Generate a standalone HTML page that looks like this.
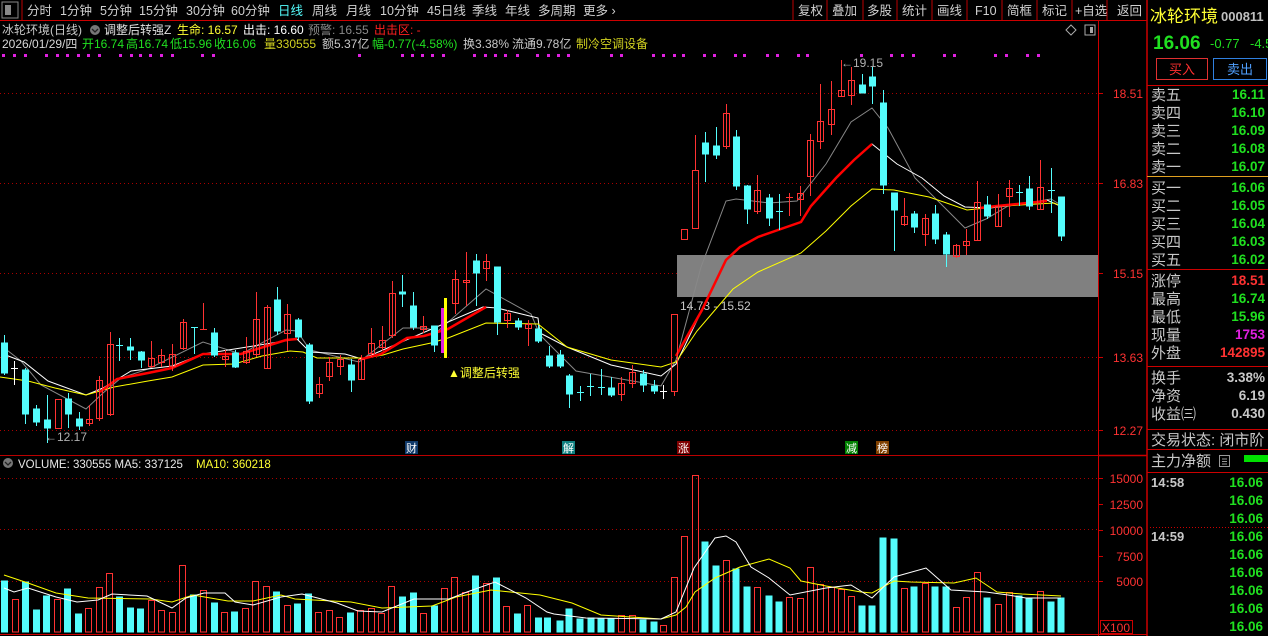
<!DOCTYPE html>
<html><head><meta charset="utf-8"><style>
html,body{margin:0;padding:0;background:#000;width:1268px;height:636px;overflow:hidden}
svg{display:block}
text{font-family:"Liberation Sans","Noto Sans CJK SC",sans-serif}
.c{fill:#54FCFC;stroke:#54FCFC;stroke-width:1}
.r{fill:none;stroke:#FF3232;stroke-width:1}
.cw{stroke:#54FCFC;stroke-width:1}
.rw{stroke:#FF3232;stroke-width:1}
</style></head><body>
<svg width="1268" height="636" viewBox="0 0 1268 636" xmlns="http://www.w3.org/2000/svg">
<!-- toolbar -->
<rect x="2" y="2" width="16" height="16" fill="none" stroke="#888"/>
<rect x="5" y="5" width="6" height="10" fill="#888"/>
<line x1="22" y1="0" x2="22" y2="20" stroke="#b00"/>
<g font-size="12.5" fill="#d0d0d0">
<text x="27" y="15">分时</text><text x="60" y="15">1分钟</text><text x="100" y="15">5分钟</text><text x="139" y="15">15分钟</text><text x="186" y="15">30分钟</text><text x="231" y="15">60分钟</text>
<text x="278" y="15" fill="#54FCFC">日线</text><text x="312" y="15">周线</text><text x="346" y="15">月线</text><text x="380" y="15">10分钟</text><text x="427" y="15">45日线</text><text x="472" y="15">季线</text><text x="505" y="15">年线</text><text x="538" y="15">多周期</text><text x="583" y="15">更多 ›</text>
<text x="798" y="15">复权</text><text x="832" y="15">叠加</text><text x="867" y="15">多股</text><text x="902" y="15">统计</text><text x="937" y="15">画线</text><text x="975" y="15">F10</text><text x="1007" y="15">简框</text><text x="1042" y="15">标记</text><text x="1075" y="15">+自选</text><text x="1117" y="15">返回</text>
</g>
<g stroke="#b00"><line x1="793" y1="0" x2="793" y2="20"/><line x1="827" y1="0" x2="827" y2="20"/><line x1="863" y1="0" x2="863" y2="20"/><line x1="897" y1="0" x2="897" y2="20"/><line x1="932" y1="0" x2="932" y2="20"/><line x1="967" y1="0" x2="967" y2="20"/><line x1="1002" y1="0" x2="1002" y2="20"/><line x1="1037" y1="0" x2="1037" y2="20"/><line x1="1072" y1="0" x2="1072" y2="20"/><line x1="1107" y1="0" x2="1107" y2="20"/></g>
<line x1="0" y1="20.5" x2="1147" y2="20.5" stroke="#c00"/>
<line x1="1147" y1="0" x2="1147" y2="636" stroke="#c00" stroke-width="1.5"/>
<line x1="1098.5" y1="20" x2="1098.5" y2="636" stroke="#c00"/>
<!-- header lines -->
<g font-size="12">
<text x="2" y="34" fill="#c8c8c8">冰轮环境(日线)</text>
<circle cx="95" cy="30" r="5" fill="#777"/><path d="M92 29 L95 32 L98 29" stroke="#222" fill="none" stroke-width="1.3"/>
<text x="104" y="34" fill="#e0e0e0">调整后转强Z</text>
<text x="177" y="34" fill="#ffff33">生命: 16.57</text>
<text x="243" y="34" fill="#fff">出击: 16.60</text>
<text x="308" y="34" fill="#888">预警: 16.55</text>
<text x="374" y="34" fill="#ff2020">出击区: -</text>
<text x="2" y="48" fill="#d8d8d8">2026/01/29/四</text>
<text x="82" y="48" fill="#20e020">开16.74</text>
<text x="126" y="48" fill="#20e020">高16.74</text>
<text x="170" y="48" fill="#20e020">低15.96</text>
<text x="214" y="48" fill="#20e020">收16.06</text>
<text x="264" y="48" fill="#d0d020">量330555</text>
<text x="322" y="48" fill="#c8c8c8">额5.37亿</text>
<text x="372" y="48" fill="#20e020">幅-0.77(-4.58%)</text>
<text x="463" y="48" fill="#c8c8c8">换3.38%</text>
<text x="512" y="48" fill="#c8c8c8">流通9.78亿</text>
<text x="576" y="48" fill="#d0d020">制冷空调设备</text>
</g>
<path d="M1071 25 L1076 30 L1071 35 L1066 30 Z" fill="none" stroke="#aaa"/>
<rect x="1085" y="25" width="10" height="10" fill="none" stroke="#aaa"/><rect x="1090" y="27" width="3" height="6" fill="#aaa"/>
<!-- magenta dots -->
<g fill="#e020e0">
<rect x="2" y="54" width="3" height="3"/><rect x="13" y="54" width="3" height="3"/><rect x="24" y="54" width="3" height="3"/><rect x="45" y="54" width="3" height="3"/><rect x="56" y="54" width="3" height="3"/><rect x="66" y="54" width="3" height="3"/><rect x="77" y="54" width="3" height="3"/><rect x="87" y="54" width="3" height="3"/><rect x="98" y="54" width="3" height="3"/><rect x="119" y="54" width="3" height="3"/><rect x="130" y="54" width="3" height="3"/><rect x="139" y="54" width="3" height="3"/><rect x="149" y="54" width="3" height="3"/><rect x="160" y="54" width="3" height="3"/><rect x="171" y="54" width="3" height="3"/><rect x="201" y="54" width="3" height="3"/><rect x="212" y="54" width="3" height="3"/><rect x="358" y="54" width="3" height="3"/><rect x="401" y="54" width="3" height="3"/><rect x="411" y="54" width="3" height="3"/><rect x="421" y="54" width="3" height="3"/><rect x="431" y="54" width="3" height="3"/><rect x="442" y="54" width="3" height="3"/><rect x="473" y="54" width="3" height="3"/><rect x="484" y="54" width="3" height="3"/><rect x="494" y="54" width="3" height="3"/><rect x="504" y="54" width="3" height="3"/><rect x="516" y="54" width="3" height="3"/><rect x="536" y="54" width="3" height="3"/><rect x="547" y="54" width="3" height="3"/><rect x="557" y="54" width="3" height="3"/><rect x="567" y="54" width="3" height="3"/><rect x="610" y="54" width="3" height="3"/><rect x="620" y="54" width="3" height="3"/><rect x="652" y="54" width="3" height="3"/><rect x="662" y="54" width="3" height="3"/><rect x="673" y="54" width="3" height="3"/><rect x="682" y="54" width="3" height="3"/><rect x="703" y="54" width="3" height="3"/><rect x="713" y="54" width="3" height="3"/><rect x="734" y="54" width="3" height="3"/><rect x="743" y="54" width="3" height="3"/><rect x="766" y="54" width="3" height="3"/><rect x="776" y="54" width="3" height="3"/><rect x="797" y="54" width="3" height="3"/><rect x="806" y="54" width="3" height="3"/><rect x="860" y="54" width="3" height="3"/><rect x="890" y="54" width="3" height="3"/><rect x="901" y="54" width="3" height="3"/><rect x="912" y="54" width="3" height="3"/><rect x="943" y="54" width="3" height="3"/><rect x="953" y="54" width="3" height="3"/><rect x="994" y="54" width="3" height="3"/><rect x="1005" y="54" width="3" height="3"/><rect x="1026" y="54" width="3" height="3"/><rect x="1037" y="54" width="3" height="3"/>
</g>
<!-- grid -->
<g stroke="#a00" stroke-dasharray="1,3">
<line x1="0" y1="93.5" x2="1098" y2="93.5"/><line x1="0" y1="183.5" x2="1098" y2="183.5"/><line x1="0" y1="273.5" x2="1098" y2="273.5"/><line x1="0" y1="357.5" x2="1098" y2="357.5"/><line x1="0" y1="430.5" x2="1098" y2="430.5"/>
<line x1="0" y1="478.5" x2="1098" y2="478.5"/><line x1="0" y1="529.5" x2="1098" y2="529.5"/><line x1="0" y1="581.5" x2="1098" y2="581.5"/>
</g>
<!-- gray box -->
<rect x="677" y="255" width="421" height="42" fill="#808080"/>
<text x="680" y="310" font-size="12" fill="#c8c8c8">14.73 - 15.52</text>
<!-- MA lines -->
<polyline fill="none" stroke="#888" stroke-width="1" points="3,347 21,361 41,385 86,409 103,393 121,378 148,369 203,342 241,354 286,330 297,331 310,350 359,362 403,328 424,328 438,331 486,289 531,314 540,335 576,371 661,386 676,360 701,267 726,201 736,199 769,203 797,201 826,164 851,122 872,108 888,128 915,178 965,228 986,219 1008,206 1051,199 1061,205"/>
<polyline fill="none" stroke="#fff" stroke-width="1" points="3,354 24,362 48,381 86,395 103,388 131,371 172,366 203,354 297,339 310,352 345,354 362,359 483,307 497,308 538,318 540,333 567,347 611,365 661,376 676,364 702,310 726,260 740,247 758,237 801,222 811,206 836,178 854,160 872,144 897,164 922,178 944,196 965,207 990,208 1033,203 1047,200 1060,206"/>
<polyline fill="none" stroke="#ffff00" stroke-width="1" points="0,377 28,381 55,388 86,395 114,387 148,381 172,377 203,365 234,364 262,356 290,351 303,352 317,358 366,358 383,355 403,349 431,343 448,338 486,323 538,324 567,347 611,360 661,367 676,362 697,331 715,310 733,289 758,272 801,253 826,231 851,206 872,189 894,190 929,197 967,210 1004,206 1054,203 1061,206"/>
<polyline fill="none" stroke="#ff0000" stroke-width="2.5" points="100,392 117,379 148,373 172,368 203,354 241,354 286,340 297,339"/>
<polyline fill="none" stroke="#ff0000" stroke-width="2.5" points="362,359 381,354 407,338 424,336 448,329 486,307"/>
<polyline fill="none" stroke="#ff0000" stroke-width="2.5" points="676,356 702,310 726,260 740,247 758,237 801,222 811,206 836,178 854,160 872,144"/>
<polyline fill="none" stroke="#ff0000" stroke-width="2.5" points="980,208 997,206 1047,201"/>
<!-- candles -->
<g>
<line class="cw" x1="4.5" y1="335" x2="4.5" y2="375"/><rect class="c" x="1.5" y="343" width="6" height="30"/>
<line stroke="#fff" x1="14.5" y1="361" x2="14.5" y2="385"/><line stroke="#fff" x1="11" y1="368.5" x2="18" y2="368.5"/>
<line class="cw" x1="25.5" y1="368" x2="25.5" y2="424"/><rect class="c" x="22.5" y="370" width="6" height="44"/>
<line class="cw" x1="36.5" y1="405" x2="36.5" y2="426"/><rect class="c" x="33.5" y="409" width="6" height="13"/>
<line class="cw" x1="47.5" y1="395" x2="47.5" y2="443"/><rect class="c" x="44.5" y="420" width="6" height="8"/>
<rect class="r" x="55.5" y="399.5" width="6" height="29"/>
<line class="cw" x1="68.5" y1="393" x2="68.5" y2="428"/><rect class="c" x="65.5" y="399" width="6" height="15"/>
<line class="cw" x1="79.5" y1="412" x2="79.5" y2="430"/><rect class="c" x="76.5" y="419" width="6" height="7"/>
<line class="rw" x1="89.5" y1="405" x2="89.5" y2="426"/><rect class="r" x="86.5" y="419.5" width="6" height="4" fill="#000"/>
<line class="rw" x1="99.5" y1="376" x2="99.5" y2="421"/><rect class="r" x="96.5" y="380.5" width="6" height="38" fill="#000"/>
<line class="rw" x1="110.5" y1="332" x2="110.5" y2="416"/><rect class="r" x="107.5" y="344.5" width="6" height="70" fill="#000"/>
<line class="cw" x1="119.5" y1="338" x2="119.5" y2="361"/><line class="cw" x1="116" y1="345.5" x2="123" y2="345.5"/>
<line class="cw" x1="130.5" y1="338" x2="130.5" y2="360"/><rect class="c" x="127.5" y="347" width="6" height="3"/>
<line class="cw" x1="141.5" y1="351" x2="141.5" y2="368"/><rect class="c" x="138.5" y="352" width="6" height="8"/>
<line class="rw" x1="151.5" y1="341" x2="151.5" y2="368"/><rect class="r" x="148.5" y="358.5" width="6" height="8" fill="#000"/>
<line class="rw" x1="161.5" y1="349" x2="161.5" y2="367"/><rect class="r" x="158.5" y="355.5" width="6" height="7" fill="#000"/>
<line class="rw" x1="172.5" y1="344" x2="172.5" y2="371"/><rect class="r" x="169.5" y="354.5" width="6" height="12" fill="#000"/>
<line class="rw" x1="183.5" y1="319" x2="183.5" y2="350"/><rect class="r" x="180.5" y="322.5" width="6" height="26" fill="#000"/>
<line class="cw" x1="194.5" y1="327" x2="194.5" y2="354"/><line class="cw" x1="191" y1="327.5" x2="198" y2="327.5"/>
<line class="rw" x1="203.5" y1="303" x2="203.5" y2="330"/><line class="rw" x1="200" y1="329.5" x2="207" y2="329.5"/>
<line class="cw" x1="214.5" y1="328" x2="214.5" y2="357"/><rect class="c" x="211.5" y="333" width="6" height="22"/>
<line class="rw" x1="225.5" y1="350" x2="225.5" y2="367"/><rect class="r" x="222.5" y="356.5" width="6" height="3" fill="#000"/>
<line class="cw" x1="235.5" y1="350" x2="235.5" y2="368"/><rect class="c" x="232.5" y="353" width="6" height="14"/>
<line class="rw" x1="246.5" y1="337" x2="246.5" y2="364"/><rect class="r" x="243.5" y="351.5" width="6" height="11" fill="#000"/>
<line class="rw" x1="256.5" y1="292" x2="256.5" y2="357"/><rect class="r" x="253.5" y="319.5" width="6" height="35" fill="#000"/>
<line class="rw" x1="267.5" y1="305" x2="267.5" y2="369"/><rect class="r" x="264.5" y="307.5" width="6" height="61" fill="#000"/>
<line class="cw" x1="277.5" y1="287" x2="277.5" y2="335"/><rect class="c" x="274.5" y="300" width="6" height="31"/>
<line class="rw" x1="287.5" y1="304" x2="287.5" y2="351"/><rect class="r" x="284.5" y="314.5" width="6" height="19" fill="#000"/>
<line class="cw" x1="298.5" y1="318" x2="298.5" y2="340"/><rect class="c" x="295.5" y="320" width="6" height="17"/>
<line class="cw" x1="309.5" y1="343" x2="309.5" y2="404"/><rect class="c" x="306.5" y="345" width="6" height="56"/>
<line class="rw" x1="319.5" y1="377" x2="319.5" y2="398"/><rect class="r" x="316.5" y="384.5" width="6" height="9" fill="#000"/>
<line class="rw" x1="329.5" y1="357" x2="329.5" y2="381"/><rect class="r" x="326.5" y="362.5" width="6" height="14" fill="#000"/>
<line class="rw" x1="340.5" y1="355" x2="340.5" y2="375"/><rect class="r" x="337.5" y="359.5" width="6" height="7" fill="#000"/>
<line class="cw" x1="351.5" y1="359" x2="351.5" y2="392"/><rect class="c" x="348.5" y="365" width="6" height="15"/>
<line class="rw" x1="361.5" y1="355" x2="361.5" y2="380"/><rect class="r" x="358.5" y="359.5" width="6" height="20" fill="#000"/>
<line class="rw" x1="371.5" y1="328" x2="371.5" y2="357"/><rect class="r" x="368.5" y="343.5" width="6" height="10" fill="#000"/>
<line class="rw" x1="382.5" y1="326" x2="382.5" y2="351"/><rect class="r" x="379.5" y="340.5" width="6" height="7" fill="#000"/>
<line class="rw" x1="392.5" y1="281" x2="392.5" y2="338"/><rect class="r" x="389.5" y="293.5" width="6" height="42" fill="#000"/>
<line class="cw" x1="402.5" y1="275" x2="402.5" y2="307"/><rect class="c" x="399.5" y="292" width="6" height="2"/>
<line class="cw" x1="413.5" y1="292" x2="413.5" y2="330"/><rect class="c" x="410.5" y="306" width="6" height="21"/>
<line class="rw" x1="423.5" y1="316" x2="423.5" y2="333"/><rect class="r" x="420.5" y="326.5" width="6" height="3" fill="#000"/>
<line class="cw" x1="434.5" y1="326" x2="434.5" y2="352"/><rect class="c" x="431.5" y="326" width="6" height="19"/>
<rect x="441" y="308" width="4" height="45" fill="#e020e0"/><rect x="444" y="298" width="3" height="60" fill="#ffff00"/>
<line class="rw" x1="455.5" y1="270" x2="455.5" y2="314"/><rect class="r" x="452.5" y="279.5" width="6" height="24" fill="#000"/>
<line class="rw" x1="466.5" y1="252" x2="466.5" y2="306"/><rect class="r" x="463.5" y="280.5" width="6" height="2" fill="#000"/>
<line class="cw" x1="476.5" y1="254" x2="476.5" y2="306"/><rect class="c" x="473.5" y="261" width="6" height="12"/>
<line class="rw" x1="486.5" y1="254" x2="486.5" y2="281"/><rect class="r" x="483.5" y="261.5" width="6" height="7" fill="#000"/>
<line class="cw" x1="497.5" y1="267" x2="497.5" y2="335"/><rect class="c" x="494.5" y="267" width="6" height="55"/>
<line class="rw" x1="507.5" y1="310" x2="507.5" y2="328"/><rect class="r" x="504.5" y="313.5" width="6" height="7" fill="#000"/>
<line class="cw" x1="518.5" y1="318" x2="518.5" y2="330"/><rect class="c" x="515.5" y="321" width="6" height="6"/>
<line class="rw" x1="528.5" y1="320" x2="528.5" y2="346"/><rect class="r" x="525.5" y="324.5" width="6" height="4" fill="#000"/>
<line class="cw" x1="538.5" y1="325" x2="538.5" y2="343"/><rect class="c" x="535.5" y="329" width="6" height="12"/>
<line class="cw" x1="549.5" y1="346" x2="549.5" y2="368"/><rect class="c" x="546.5" y="356" width="6" height="10"/>
<line class="cw" x1="560.5" y1="350" x2="560.5" y2="368"/><rect class="c" x="557.5" y="355" width="6" height="11"/>
<line class="cw" x1="569.5" y1="374" x2="569.5" y2="408"/><rect class="c" x="566.5" y="376" width="6" height="18"/>
<line class="cw" x1="580.5" y1="386" x2="580.5" y2="401"/><line class="cw" x1="577" y1="392.5" x2="584" y2="392.5"/>
<line class="cw" x1="590.5" y1="374" x2="590.5" y2="396"/><line class="cw" x1="587" y1="386.5" x2="594" y2="386.5"/>
<line class="cw" x1="601.5" y1="369" x2="601.5" y2="395"/><line class="cw" x1="598" y1="387.5" x2="605" y2="387.5"/>
<line class="cw" x1="611.5" y1="377" x2="611.5" y2="397"/><rect class="c" x="608.5" y="388" width="6" height="7"/>
<line class="rw" x1="621.5" y1="377" x2="621.5" y2="401"/><rect class="r" x="618.5" y="383.5" width="6" height="11" fill="#000"/>
<line class="rw" x1="632.5" y1="365" x2="632.5" y2="388"/><rect class="r" x="629.5" y="372.5" width="6" height="11" fill="#000"/>
<line class="cw" x1="643.5" y1="370" x2="643.5" y2="392"/><rect class="c" x="640.5" y="374" width="6" height="11"/>
<line class="cw" x1="654.5" y1="380" x2="654.5" y2="394"/><rect class="c" x="651.5" y="386" width="6" height="5"/>
<line stroke="#fff" x1="663.5" y1="385" x2="663.5" y2="399"/><line stroke="#fff" x1="660" y1="391.5" x2="667" y2="391.5"/>
<line class="rw" x1="674.5" y1="391" x2="674.5" y2="396"/><rect class="r" x="671.5" y="314.5" width="6" height="77" fill="none"/>
<rect class="r" x="681.5" y="229.5" width="6" height="10" fill="#000"/>
<line class="rw" x1="695.5" y1="135" x2="695.5" y2="170"/><rect class="r" x="692.5" y="170.5" width="6" height="58" fill="#000"/>
<line class="cw" x1="705.5" y1="132" x2="705.5" y2="182"/><rect class="c" x="702.5" y="143" width="6" height="11"/>
<line class="cw" x1="716.5" y1="127" x2="716.5" y2="159"/><rect class="c" x="713.5" y="146" width="6" height="9"/>
<line class="rw" x1="726.5" y1="104" x2="726.5" y2="149"/><rect class="r" x="723.5" y="113.5" width="6" height="33" fill="#000"/>
<line class="cw" x1="736.5" y1="130" x2="736.5" y2="190"/><rect class="c" x="733.5" y="137" width="6" height="49"/>
<line class="cw" x1="747.5" y1="185" x2="747.5" y2="224"/><rect class="c" x="744.5" y="186" width="6" height="23"/>
<line class="rw" x1="757.5" y1="175" x2="757.5" y2="214"/><rect class="r" x="754.5" y="190.5" width="6" height="21" fill="#000"/>
<line class="cw" x1="769.5" y1="194" x2="769.5" y2="226"/><rect class="c" x="766.5" y="198" width="6" height="20"/>
<line class="cw" x1="779.5" y1="194" x2="779.5" y2="230"/><line class="cw" x1="776" y1="211.5" x2="783" y2="211.5"/>
<line class="rw" x1="789.5" y1="193" x2="789.5" y2="216"/><line class="rw" x1="786" y1="197.5" x2="793" y2="197.5"/>
<line class="rw" x1="800.5" y1="186" x2="800.5" y2="216"/><rect class="r" x="797.5" y="193.5" width="6" height="6" fill="#000"/>
<line class="rw" x1="810.5" y1="134" x2="810.5" y2="196"/><rect class="r" x="807.5" y="140.5" width="6" height="36" fill="#000"/>
<line class="rw" x1="820.5" y1="84" x2="820.5" y2="149"/><rect class="r" x="817.5" y="121.5" width="6" height="20" fill="#000"/>
<line class="rw" x1="831.5" y1="81" x2="831.5" y2="135"/><rect class="r" x="828.5" y="109.5" width="6" height="15" fill="#000"/>
<line class="rw" x1="841.5" y1="60" x2="841.5" y2="96"/><rect class="r" x="838.5" y="90.5" width="6" height="6" fill="#000"/>
<line class="rw" x1="851.5" y1="67" x2="851.5" y2="105"/><rect class="r" x="848.5" y="80.5" width="6" height="15" fill="#000"/>
<line class="cw" x1="862.5" y1="74" x2="862.5" y2="93"/><rect class="c" x="859.5" y="85" width="6" height="8"/>
<line class="cw" x1="872.5" y1="67" x2="872.5" y2="104"/><rect class="c" x="869.5" y="77" width="6" height="9"/>
<line class="cw" x1="883.5" y1="90" x2="883.5" y2="194"/><rect class="c" x="880.5" y="103" width="6" height="82"/>
<line class="cw" x1="894.5" y1="193" x2="894.5" y2="251"/><rect class="c" x="891.5" y="193" width="6" height="17"/>
<line class="rw" x1="904.5" y1="198" x2="904.5" y2="226"/><rect class="r" x="901.5" y="216.5" width="6" height="8" fill="#000"/>
<line class="cw" x1="914.5" y1="211" x2="914.5" y2="233"/><rect class="c" x="911.5" y="214" width="6" height="13"/>
<line class="rw" x1="925.5" y1="214" x2="925.5" y2="246"/><rect class="r" x="922.5" y="218.5" width="6" height="16" fill="#000"/>
<line class="cw" x1="935.5" y1="205" x2="935.5" y2="244"/><rect class="c" x="932.5" y="214" width="6" height="25"/>
<line class="cw" x1="946.5" y1="232" x2="946.5" y2="267"/><rect class="c" x="943.5" y="235" width="6" height="19"/>
<line class="rw" x1="956.5" y1="244" x2="956.5" y2="258"/><rect class="r" x="953.5" y="245.5" width="6" height="11" fill="#000"/>
<line class="rw" x1="966.5" y1="229" x2="966.5" y2="255"/><rect class="r" x="963.5" y="241.5" width="6" height="4" fill="#000"/>
<line class="rw" x1="977.5" y1="181" x2="977.5" y2="241"/><rect class="r" x="974.5" y="202.5" width="6" height="38" fill="#000"/>
<line class="cw" x1="987.5" y1="196" x2="987.5" y2="219"/><rect class="c" x="984.5" y="205" width="6" height="11"/>
<line class="rw" x1="998.5" y1="194" x2="998.5" y2="226"/><rect class="r" x="995.5" y="206.5" width="6" height="20" fill="#000"/>
<line class="rw" x1="1009.5" y1="180" x2="1009.5" y2="217"/><rect class="r" x="1006.5" y="188.5" width="6" height="8" fill="#000"/>
<line class="cw" x1="1019.5" y1="185" x2="1019.5" y2="206"/><line class="cw" x1="1016" y1="192.5" x2="1023" y2="192.5"/>
<line class="cw" x1="1029.5" y1="176" x2="1029.5" y2="210"/><rect class="c" x="1026.5" y="189" width="6" height="17"/>
<line class="rw" x1="1040.5" y1="160" x2="1040.5" y2="209"/><rect class="r" x="1037.5" y="187.5" width="6" height="22" fill="#000"/>
<line class="cw" x1="1051.5" y1="168" x2="1051.5" y2="213"/><line class="cw" x1="1048" y1="190.5" x2="1055" y2="190.5"/>
<line class="cw" x1="1061.5" y1="197" x2="1061.5" y2="241"/><rect class="c" x="1058.5" y="197" width="6" height="39"/>
</g>
<!-- annotations -->
<text x="448" y="377" font-size="12" fill="#ffff33">▲调整后转强</text>
<text x="45" y="441" font-size="12" fill="#b0b0b0">←12.17</text>
<text x="841" y="67" font-size="12" fill="#b0b0b0">←19.15</text>
<line x1="0" y1="455.5" x2="1098" y2="455.5" stroke="#b00"/>
<g font-size="11" fill="#fff" text-anchor="middle">
<rect x="405" y="441" width="13" height="13" fill="#103a6a"/><text x="411.5" y="452">财</text>
<rect x="562" y="441" width="13" height="13" fill="#108080"/><text x="568.5" y="452">解</text>
<rect x="677" y="441" width="13" height="13" fill="#800000"/><text x="683.5" y="452">涨</text>
<rect x="845" y="441" width="13" height="13" fill="#008000"/><text x="851.5" y="452">减</text>
<rect x="876" y="441" width="13" height="13" fill="#804000"/><text x="882.5" y="452">榜</text>
</g>
<!-- volume panel -->
<circle cx="8" cy="463" r="5" fill="#777"/><path d="M5 462 L8 465 L11 462" stroke="#222" fill="none" stroke-width="1.3"/>
<text x="18" y="468" font-size="11.5" fill="#e8e8e8">VOLUME: 330555  MA5: 337125</text>
<text x="196" y="468" font-size="11.5" fill="#ffff33">MA10: 360218</text>
<g>
<rect class="c" x="1.5" y="581" width="6" height="51"/>
<rect class="r" x="12.5" y="599.5" width="6" height="32.5"/>
<rect class="c" x="22.5" y="582" width="6" height="50"/>
<rect class="c" x="33.5" y="610" width="6" height="22"/>
<rect class="c" x="43.5" y="596" width="6" height="36"/>
<rect class="r" x="54.5" y="599.5" width="6" height="32.5"/>
<rect class="c" x="64.5" y="589" width="6" height="43"/>
<rect class="c" x="75.5" y="614" width="6" height="18"/>
<rect class="r" x="85.5" y="608.5" width="6" height="23.5"/>
<rect class="r" x="96.5" y="587.5" width="6" height="44.5"/>
<rect class="r" x="106.5" y="573.5" width="6" height="58.5"/>
<rect class="c" x="116.5" y="597" width="6" height="35"/>
<rect class="c" x="127.5" y="608" width="6" height="24"/>
<rect class="c" x="137.5" y="609" width="6" height="23"/>
<rect class="r" x="148.5" y="600.5" width="6" height="31.5"/>
<rect class="r" x="158.5" y="610.5" width="6" height="21.5"/>
<rect class="r" x="169.5" y="612.5" width="6" height="19.5"/>
<rect class="r" x="179.5" y="565.5" width="6" height="66.5"/>
<rect class="c" x="190.5" y="595" width="6" height="37"/>
<rect class="r" x="200.5" y="590.5" width="6" height="41.5"/>
<rect class="c" x="211.5" y="603" width="6" height="29"/>
<rect class="r" x="221.5" y="612.5" width="6" height="19.5"/>
<rect class="c" x="231.5" y="612" width="6" height="20"/>
<rect class="r" x="242.5" y="608.5" width="6" height="23.5"/>
<rect class="r" x="252.5" y="581.5" width="6" height="50.5"/>
<rect class="r" x="263.5" y="586.5" width="6" height="45.5"/>
<rect class="c" x="273.5" y="592" width="6" height="40"/>
<rect class="r" x="284.5" y="605.5" width="6" height="26.5"/>
<rect class="c" x="294.5" y="604" width="6" height="28"/>
<rect class="c" x="305.5" y="594" width="6" height="38"/>
<rect class="r" x="315.5" y="612.5" width="6" height="19.5"/>
<rect class="r" x="326.5" y="610.5" width="6" height="21.5"/>
<rect class="r" x="336.5" y="617.5" width="6" height="14.5"/>
<rect class="c" x="347.5" y="613" width="6" height="19"/>
<rect class="r" x="357.5" y="610.5" width="6" height="21.5"/>
<rect class="r" x="368.5" y="608.5" width="6" height="23.5"/>
<rect class="r" x="378.5" y="613.5" width="6" height="18.5"/>
<rect class="r" x="388.5" y="586.5" width="6" height="45.5"/>
<rect class="c" x="399.5" y="597" width="6" height="35"/>
<rect class="c" x="410.5" y="593" width="6" height="39"/>
<rect class="r" x="420.5" y="613.5" width="6" height="18.5"/>
<rect class="c" x="431.5" y="606" width="6" height="26"/>
<rect class="r" x="441.5" y="588.5" width="6" height="43.5"/>
<rect class="r" x="451.5" y="577.5" width="6" height="54.5"/>
<rect class="r" x="462.5" y="592.5" width="6" height="39.5"/>
<rect class="c" x="472.5" y="576" width="6" height="56"/>
<rect class="r" x="483.5" y="583.5" width="6" height="48.5"/>
<rect class="c" x="493.5" y="578" width="6" height="54"/>
<rect class="r" x="503.5" y="606.5" width="6" height="25.5"/>
<rect class="c" x="514.5" y="614" width="6" height="18"/>
<rect class="r" x="524.5" y="605.5" width="6" height="26.5"/>
<rect class="c" x="535.5" y="618" width="6" height="14"/>
<rect class="c" x="544.5" y="618" width="6" height="14"/>
<rect class="c" x="557" y="621" width="6" height="11"/>
<rect class="c" x="566" y="609" width="6" height="23"/>
<rect class="c" x="577" y="619" width="6" height="13"/>
<rect class="c" x="588" y="618" width="6" height="14"/>
<rect class="c" x="598" y="619" width="6" height="13"/>
<rect class="c" x="608" y="619" width="6" height="13"/>
<rect class="r" x="618.5" y="615.5" width="6" height="16.5"/>
<rect class="r" x="629.5" y="615.5" width="6" height="16.5"/>
<rect class="c" x="640" y="620" width="6" height="12"/>
<rect class="c" x="651" y="622" width="6" height="10"/>
<rect class="r" x="660.5" y="625.5" width="6" height="6.5"/>
<rect class="r" x="671.5" y="577.5" width="6" height="54.5"/>
<rect class="r" x="681.5" y="536.5" width="6" height="95.5"/>
<rect class="r" x="692.5" y="475.5" width="6" height="156.5"/>
<rect class="c" x="702" y="542" width="6" height="90"/>
<rect class="c" x="713" y="566" width="6" height="66"/>
<rect class="r" x="723.5" y="560.5" width="6" height="71.5"/>
<rect class="c" x="733" y="569" width="6" height="63"/>
<rect class="c" x="744" y="587" width="6" height="45"/>
<rect class="r" x="754.5" y="587.5" width="6" height="44.5"/>
<rect class="c" x="766" y="596" width="6" height="36"/>
<rect class="c" x="776" y="602" width="6" height="30"/>
<rect class="r" x="786.5" y="597.5" width="6" height="34.5"/>
<rect class="r" x="797.5" y="598.5" width="6" height="33.5"/>
<rect class="r" x="807.5" y="567.5" width="6" height="64.5"/>
<rect class="r" x="817.5" y="584.5" width="6" height="47.5"/>
<rect class="r" x="828.5" y="587.5" width="6" height="44.5"/>
<rect class="r" x="838.5" y="589.5" width="6" height="42.5"/>
<rect class="r" x="848.5" y="596.5" width="6" height="35.5"/>
<rect class="c" x="859" y="606" width="6" height="26"/>
<rect class="c" x="869" y="606" width="6" height="26"/>
<rect class="c" x="880" y="538" width="6" height="94"/>
<rect class="c" x="891" y="539" width="6" height="93"/>
<rect class="r" x="901.5" y="588.5" width="6" height="43.5"/>
<rect class="c" x="911" y="587" width="6" height="45"/>
<rect class="r" x="922.5" y="583.5" width="6" height="48.5"/>
<rect class="c" x="932" y="587" width="6" height="45"/>
<rect class="c" x="943" y="587" width="6" height="45"/>
<rect class="r" x="953.5" y="607.5" width="6" height="24.5"/>
<rect class="r" x="963.5" y="597.5" width="6" height="34.5"/>
<rect class="r" x="974.5" y="572.5" width="6" height="59.5"/>
<rect class="c" x="984" y="598" width="6" height="34"/>
<rect class="r" x="995.5" y="604.5" width="6" height="27.5"/>
<rect class="r" x="1006.5" y="592.5" width="6" height="39.5"/>
<rect class="c" x="1016" y="596" width="6" height="36"/>
<rect class="c" x="1026" y="599" width="6" height="33"/>
<rect class="r" x="1037.5" y="591.5" width="6" height="40.5"/>
<rect class="c" x="1048" y="602" width="6" height="30"/>
<rect class="c" x="1058" y="598" width="6" height="34"/>
</g>
<polyline fill="none" stroke="#ffff00" stroke-width="1" points="4,575 28,583 56,593 88,598 151,599 172,602 193,595 228,601 253,601 281,595 295,599 351,602 382,608 432,606 456,597 491,590 540,595 572,603 601,615 661,619 676,615 686,607 695,592 715,578 740,567 769,559 790,568 801,581 826,586 861,592 872,593 894,581 911,582 954,583 976,578 997,592 1022,594 1061,596"/>
<polyline fill="none" stroke="#fff" stroke-width="1" points="4,588 14,592 28,588 56,597 77,602 98,600 112,594 147,596 172,608 186,598 204,593 225,593 235,602 253,605 281,597 302,594 337,603 358,611 382,612 414,599 449,599 467,592 495,582 526,598 547,612 554,614 586,618 661,619 676,612 694,568 715,538 726,536 736,542 751,567 769,578 790,595 826,588 851,585 872,598 894,577 926,568 951,590 986,592 1008,595 1026,598 1061,598"/>
<line x1="0" y1="634.5" x2="1147" y2="634.5" stroke="#c00"/>
<!-- price axis -->
<g stroke="#c00"><line x1="1099" y1="93.5" x2="1103" y2="93.5"/><line x1="1099" y1="183.5" x2="1103" y2="183.5"/><line x1="1099" y1="273.5" x2="1103" y2="273.5"/><line x1="1099" y1="357.5" x2="1103" y2="357.5"/><line x1="1099" y1="430.5" x2="1103" y2="430.5"/>
<line x1="1099" y1="478.5" x2="1103" y2="478.5"/><line x1="1099" y1="504.5" x2="1103" y2="504.5"/><line x1="1099" y1="530.5" x2="1103" y2="530.5"/><line x1="1099" y1="556.5" x2="1103" y2="556.5"/><line x1="1099" y1="581.5" x2="1103" y2="581.5"/></g>
<g font-size="12" fill="#ff3232" text-anchor="end">
<text x="1143" y="98">18.51</text><text x="1143" y="188">16.83</text><text x="1143" y="278">15.15</text><text x="1143" y="362">13.63</text><text x="1143" y="435">12.27</text>
<text x="1143" y="483">15000</text><text x="1143" y="509">12500</text><text x="1143" y="535">10000</text><text x="1143" y="561">7500</text><text x="1143" y="586">5000</text>
</g>
<rect x="1100.5" y="620.5" width="32" height="13" fill="none" stroke="#c00"/>
<text x="1102" y="632" font-size="12" fill="#ff3232">X100</text>
<line x1="1098" y1="455.5" x2="1147" y2="455.5" stroke="#c00" stroke-width="1.5"/>
<!-- right panel -->
<text x="1150" y="22" font-size="17" fill="#ffff33">冰轮环境</text>
<text x="1221" y="21" font-size="13" font-weight="bold" fill="#c0c0c0">000811</text>
<text x="1153" y="49" font-size="19" font-weight="bold" fill="#20e020">16.06</text>
<text x="1210" y="48" font-size="13" fill="#20e020">-0.77</text>
<text x="1250" y="48" font-size="13" fill="#20e020">-4.58</text>
<rect x="1156.5" y="58.5" width="51" height="21" fill="none" stroke="#e03030"/>
<text x="1182" y="74" font-size="13" fill="#ff3030" text-anchor="middle">买入</text>
<rect x="1213.5" y="58.5" width="53" height="21" fill="none" stroke="#3080e0"/>
<text x="1240" y="74" font-size="13" fill="#50a0ff" text-anchor="middle">卖出</text>
<g stroke="#c00"><line x1="1147" y1="85.5" x2="1268" y2="85.5"/><line x1="1147" y1="269.5" x2="1268" y2="269.5"/><line x1="1147" y1="366.5" x2="1268" y2="366.5"/><line x1="1147" y1="429.5" x2="1268" y2="429.5"/><line x1="1147" y1="449.5" x2="1268" y2="449.5"/><line x1="1147" y1="472.5" x2="1268" y2="472.5"/></g>
<line x1="1147" y1="176.5" x2="1268" y2="176.5" stroke="#e0a020"/>
<line x1="1150" y1="527.5" x2="1268" y2="527.5" stroke="#c00" stroke-dasharray="1,2"/>
<g font-size="15" fill="#c8c8c8">
<text x="1151" y="100">卖五</text><text x="1151" y="118">卖四</text><text x="1151" y="136">卖三</text><text x="1151" y="154">卖二</text><text x="1151" y="172">卖一</text>
<text x="1151" y="193">买一</text><text x="1151" y="211">买二</text><text x="1151" y="229">买三</text><text x="1151" y="247">买四</text><text x="1151" y="265">买五</text>
<text x="1151" y="286">涨停</text><text x="1151" y="304">最高</text><text x="1151" y="322">最低</text><text x="1151" y="340">现量</text><text x="1151" y="358">外盘</text>
<text x="1151" y="383">换手</text><text x="1151" y="401">净资</text><text x="1151" y="419">收益㈢</text>
<text x="1151" y="445">交易状态: 闭市阶</text>
<text x="1151" y="466">主力净额</text>
</g>
<rect x="1219.5" y="455.5" width="10" height="11" fill="none" stroke="#999"/><g stroke="#999"><line x1="1222" y1="459" x2="1227" y2="459"/><line x1="1222" y1="461.5" x2="1227" y2="461.5"/><line x1="1222" y1="464" x2="1227" y2="464"/></g>
<rect x="1244" y="455" width="24" height="7" fill="#00e000"/>
<g font-size="13.5" font-weight="bold" text-anchor="end">
<g fill="#20e020"><text x="1265" y="99">16.11</text><text x="1265" y="117">16.10</text><text x="1265" y="135">16.09</text><text x="1265" y="153">16.08</text><text x="1265" y="171">16.07</text>
<text x="1265" y="192">16.06</text><text x="1265" y="210">16.05</text><text x="1265" y="228">16.04</text><text x="1265" y="246">16.03</text><text x="1265" y="264">16.02</text>
<text x="1265" y="303">16.74</text><text x="1265" y="321">15.96</text></g>
<text x="1265" y="285" fill="#ff3232">18.51</text>
<text x="1265" y="339" fill="#e020e0">1753</text>
<text x="1265" y="357" fill="#ff3232">142895</text>
<g fill="#c8c8c8"><text x="1265" y="382">3.38%</text><text x="1265" y="400">6.19</text><text x="1265" y="418">0.430</text></g>
<g fill="#20e020"><text x="1263" y="487">16.06</text><text x="1263" y="505">16.06</text><text x="1263" y="523">16.06</text><text x="1263" y="541">16.06</text><text x="1263" y="559">16.06</text><text x="1263" y="577">16.06</text><text x="1263" y="595">16.06</text><text x="1263" y="613">16.06</text><text x="1263" y="631">16.06</text></g>
</g>
<g font-size="13" font-weight="bold" fill="#c8c8c8"><text x="1151" y="487">14:58</text><text x="1151" y="541">14:59</text></g>
</svg>
</body></html>
